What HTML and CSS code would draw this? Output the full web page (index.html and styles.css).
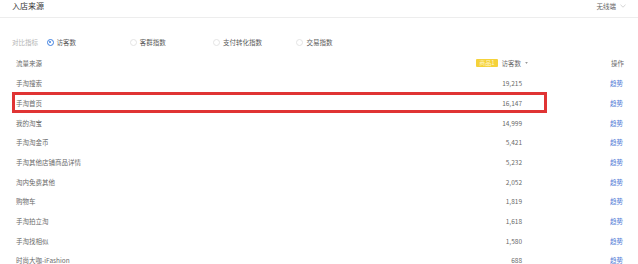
FILE: index.html
```html
<!DOCTYPE html>
<html lang="zh-CN">
<head>
<meta charset="utf-8">
<link rel="stylesheet" href="styles.css">
</head>
<body>
<div class="page">
  <div class="top">
    <div class="title">入店来源</div>
    <div class="device">无线端
      <svg class="chev" width="6" height="4" viewBox="0 0 6 4"><path d="M0.5 0.8 L3 3.2 L5.5 0.8" fill="none" stroke="#c8c8c8" stroke-width="0.8"/></svg>
    </div>
  </div>

  <div class="metrics">
    <div class="metrics-label">对比指标</div>
    <div class="opts">
      <label class="opt"><span class="radio on"></span>访客数</label>
      <label class="opt"><span class="radio"></span>客群指数</label>
      <label class="opt"><span class="radio"></span>支付转化指数</label>
      <label class="opt"><span class="radio"></span>交易指数</label>
    </div>
  </div>

  <div class="table">
    <div class="row head">
      <div class="name">流量来源</div>
      <div class="num head-num"><span class="badge">商品1</span><span>访客数</span><svg class="sort" width="3" height="2" viewBox="0 0 4 3"><path d="M0 0 H4 L2 3 Z" fill="#999"/></svg></div>
      <div class="act head-act">操作</div>
    </div>
    <div class="row"><div class="name">手淘搜索</div><div class="num">19,215</div><div class="act"><a class="link">趋势</a></div></div>
    <div class="row hl"><div class="name">手淘首页</div><div class="num">16,147</div><div class="act"><a class="link">趋势</a></div></div>
    <div class="row"><div class="name">我的淘宝</div><div class="num">14,999</div><div class="act"><a class="link">趋势</a></div></div>
    <div class="row"><div class="name">手淘淘金币</div><div class="num">5,421</div><div class="act"><a class="link">趋势</a></div></div>
    <div class="row"><div class="name">手淘其他店铺商品详情</div><div class="num">5,232</div><div class="act"><a class="link">趋势</a></div></div>
    <div class="row"><div class="name">淘内免费其他</div><div class="num">2,052</div><div class="act"><a class="link">趋势</a></div></div>
    <div class="row"><div class="name">购物车</div><div class="num">1,819</div><div class="act"><a class="link">趋势</a></div></div>
    <div class="row"><div class="name">手淘拍立淘</div><div class="num">1,618</div><div class="act"><a class="link">趋势</a></div></div>
    <div class="row"><div class="name">手淘找相似</div><div class="num">1,580</div><div class="act"><a class="link">趋势</a></div></div>
    <div class="row"><div class="name">时尚大咖-iFashion</div><div class="num">688</div><div class="act"><a class="link">趋势</a></div></div>
  </div>
</div>
</body>
</html>
```

FILE: styles.css
```css
html, body {
  margin: 0;
  padding: 0;
  background: #ffffff;
}
body {
  font-family: "Noto Sans CJK SC", "Noto Sans", sans-serif;
  font-size: 6.5px;
  color: #6a6a6a;
  width: 638px;
  height: 264px;
  overflow: hidden;
}
.page {
  width: 638px;
}
.top {
  height: 18px;
  box-sizing: border-box;
  border-bottom: 1px solid #ededed;
  display: flex;
  justify-content: space-between;
  align-items: flex-start;
  padding: 0 12px 0 12px;
}
.title {
  font-size: 8px;
  line-height: 12px;
  color: #333;
}
.device {
  line-height: 12px;
  color: #666;
  display: flex;
  align-items: center;
  gap: 4px;
}
.chev {
  display: block;
}
.metrics {
  margin-top: 14px;
  height: 20px;
  display: flex;
  align-items: center;
  padding-left: 12px;
}
.metrics-label {
  color: #b4b4b4;
  width: 34.5px;
}
.opts {
  display: grid;
  grid-template-columns: repeat(4, 83.3px);
}
.opt {
  display: flex;
  align-items: center;
  gap: 3px;
  color: #5a5a5a;
}
.radio {
  width: 7px;
  height: 7px;
  box-sizing: border-box;
  border: 0.8px solid #e4e4e4;
  border-radius: 50%;
  display: flex;
  align-items: center;
  justify-content: center;
}
.radio.on {
  border-color: #3d7fe0;
}
.radio.on::after {
  content: "";
  width: 2.6px;
  height: 2.6px;
  border-radius: 50%;
  background: #3d7fe0;
}
.table {
  display: flex;
  flex-direction: column;
}
.row {
  display: grid;
  grid-template-columns: 1fr 60px 116px;
  align-items: center;
  height: 19.67px;
  padding-left: 16px;
  color: #6a6a6a;
}
.row.head {
  height: 21.5px;
}
.num {
  text-align: right;
}
.head-num {
  display: flex;
  justify-content: flex-end;
  align-items: center;
  gap: 4px;
  margin-right: -6px;
  white-space: nowrap;
}
.badge {
  background: #f5d23a;
  color: #fff6cc;
  height: 8px;
  line-height: 8px;
  padding: 0 3px;
  border-radius: 1px;
  font-size: 6px;
}
.sort {
  display: block;
}
.act {
  text-align: right;
  padding-right: 15px;
}
.head-act {
  padding-right: 14px;
}
.link {
  color: #4f7bd6;
  text-decoration: none;
}
.row.hl {
  position: relative;
}
.row.hl::after {
  content: "";
  position: absolute;
  left: 12px;
  top: -1.2px;
  width: 535px;
  height: 21px;
  box-sizing: border-box;
  border: 3px solid #e03434;
  pointer-events: none;
}
```
